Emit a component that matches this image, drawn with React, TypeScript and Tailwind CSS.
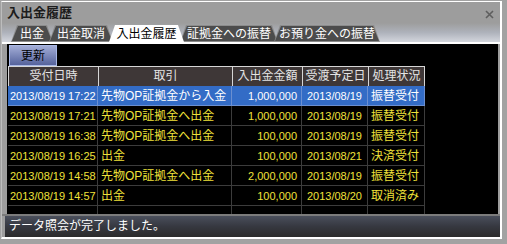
import React from 'react';

type Row = { at: string; kind: string; amount: string; date: string; status: string };

const rows: Row[] = [
  { at: '2013/08/19 17:22', kind: '先物OP証拠金から入金', amount: '1,000,000', date: '2013/08/19', status: '振替受付' },
  { at: '2013/08/19 17:21', kind: '先物OP証拠金へ出金', amount: '1,000,000', date: '2013/08/19', status: '振替受付' },
  { at: '2013/08/19 16:38', kind: '先物OP証拠金へ出金', amount: '100,000', date: '2013/08/19', status: '振替受付' },
  { at: '2013/08/19 16:25', kind: '出金', amount: '100,000', date: '2013/08/21', status: '決済受付' },
  { at: '2013/08/19 14:58', kind: '先物OP証拠金へ出金', amount: '2,000,000', date: '2013/08/19', status: '振替受付' },
  { at: '2013/08/19 14:57', kind: '出金', amount: '100,000', date: '2013/08/20', status: '取消済み' },
];

const tabs = [
  { label: '出金', w: 'w-[42px]' },
  { label: '出金取消', w: 'w-[64px]' },
  { label: '入出金履歴', w: 'w-[75px]' },
  { label: '証拠金への振替', w: 'w-[98px]' },
  { label: 'お預り金への振替', w: 'w-[106px]' },
];

const cols = 'grid grid-cols-[90px_134px_70px_66px_57px]';

// 受付・取引などの一覧（選択行は青）
function HistoryTable() {
  return (
    <div className="w-[417px] ml-px">
      <div className={`${cols} h-[20px] text-[12px] leading-[19px] text-[#e4e4e4]`}>
        {['受付日時', '取引', '入出金金額', '受渡予定日', '処理状況'].map((h, i) => (
          <div
            key={h}
            className={`bg-[#3e3737] border-t border-l border-[#d6d6d6] text-center ${i === 4 ? 'border-r' : ''}`}
          >
            {h}
          </div>
        ))}
      </div>
      {rows.map((r, i) => {
        const sel = i === 0;
        const cell = `h-[20px] border-b border-r ${sel ? 'bg-[#336cc6] border-[#6b8fd0] text-white' : 'border-[#3c3c3c] text-[#f0e23a]'}`;
        return (
          <div key={i} className={cols}>
            <div className={`${cell} pl-[2px] text-[11px] leading-[20px] whitespace-nowrap`}>{r.at}</div>
            <div className={`${cell} pl-[3px] text-[12px] leading-[20px] whitespace-nowrap`}>{r.kind}</div>
            <div className={`${cell} pr-[4px] text-right text-[11px] leading-[20px]`}>{r.amount}</div>
            <div className={`${cell} pr-[5px] text-right text-[11px] leading-[20px]`}>{r.date}</div>
            <div className={`${cell} pl-[3px] text-[12px] leading-[20px]`}>{r.status}</div>
          </div>
        );
      })}
      <div className={cols}>
        {[0, 1, 2, 3, 4].map((k) => (
          <div key={k} className="h-[20px] border-b border-r border-[#3c3c3c]" />
        ))}
      </div>
    </div>
  );
}

export default function App() {
  return (
    <div className="w-[507px] h-[244px] bg-[#a2a2a2] pt-px pl-px pr-[5px] pb-[5px] overflow-hidden font-['Liberation_Sans','Noto_Sans_CJK_JP',sans-serif]">
      <div className="h-full flex flex-col border-t border-r-2 border-b-2 border-white border-l border-l-[#bdbdbd] bg-[#9d9d9d]">
        {/* タイトルバー */}
        <div className="h-[21px] flex items-center justify-between pl-[5px] pr-[6px]">
          <span className="text-[13px] font-bold text-[#1c1c1c] leading-none">入出金履歴</span>
          <svg width="9" height="9" viewBox="0 0 9 9" className="mt-[3px]">
            <path d="M1 1 L8 8 M8 1 L1 8" stroke="#5e5e5e" strokeWidth="1.6" />
          </svg>
        </div>

        {/* タブ */}
        <div className="h-[21px] bg-gradient-to-b from-[#9d9d9d] via-[#aeb2bb] to-[#d3d6dd] flex items-end pl-[9px] border-b-2 border-white">
          {tabs.map((t, i) => {
            const active = i === 2;
            return (
              <div
                key={t.label}
                className={`${t.w} h-[17px] p-px relative ${i > 0 ? '-ml-[4px]' : ''} ${active ? 'z-10 bg-white' : 'bg-[#8c8c8c]'} [clip-path:polygon(0_100%,6px_0,calc(100%_-_6px)_0,100%_100%)]`}
              >
                <div
                  className={`h-full flex items-center justify-center text-[12px] leading-none ${active ? 'bg-white text-black' : 'bg-[#4c4c4c] text-white'} [clip-path:polygon(0_100%,6px_0,calc(100%_-_6px)_0,100%_100%)]`}
                >
                  {t.label}
                </div>
              </div>
            );
          })}
        </div>

        {/* 本体 */}
        <div className="flex-1 flex pl-[5px] pr-[2px] min-h-0">
          <div className="flex-1 bg-black overflow-hidden pt-px">
            <button className="ml-[2px] w-[48px] h-[21px] border border-[#a9b8e6] bg-gradient-to-b from-[#a3add6] to-[#56639c] text-[12px] text-black leading-none flex items-center justify-center">
              更新
            </button>
            <HistoryTable />
          </div>
        </div>

        <div className="h-[2px] bg-[#7c7c7c]" />

        {/* ステータスバー */}
        <div className="h-[21px] ml-[3px] bg-gradient-to-b from-[#4a4f5c] via-[#363840] to-[#2b2b2b] text-white text-[12px] leading-[21px] pl-[4px]">
          データ照会が完了しました。
        </div>
      </div>
    </div>
  );
}
